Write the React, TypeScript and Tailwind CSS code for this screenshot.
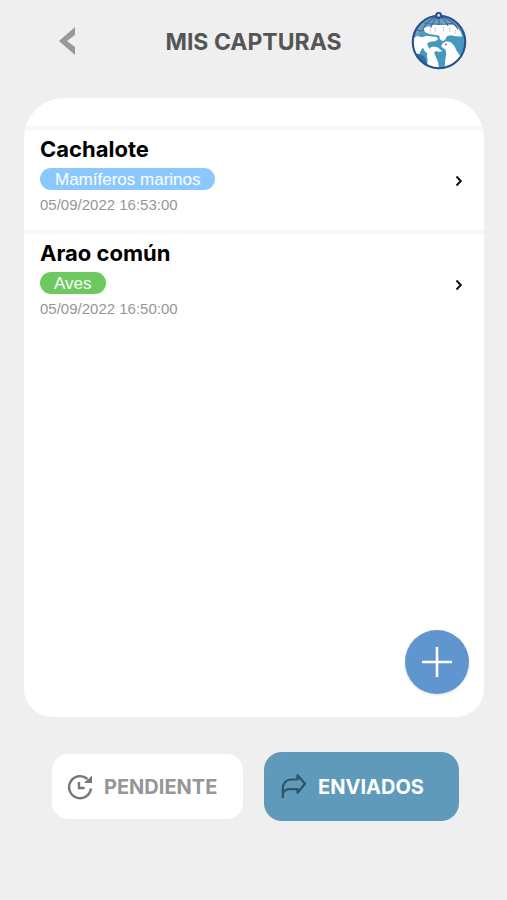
import { useState } from 'react';

interface Capture {
  id: number;
  name: string;
  group: string;
  tagClass: string;
  date: string;
}

const captures: Capture[] = [
  { id: 1, name: 'Cachalote', group: 'Mamíferos marinos', tagClass: 'bg-[#8bc8ff] px-[15px]', date: '05/09/2022 16:53:00' },
  { id: 2, name: 'Arao común', group: 'Aves', tagClass: 'bg-[#6dc95f] px-[14px]', date: '05/09/2022 16:50:00' },
];

function Logo() {
  return (
    <svg viewBox="36 24 162 168" className="w-[56px] h-[58px]" aria-hidden="true">
      <defs>
        <clipPath id="globe">
          <circle cx="117" cy="111" r="76" />
        </clipPath>
      </defs>
      <circle cx="117" cy="111" r="76" fill="#4599bd" />
      <g clipPath="url(#globe)">
        <path d="M38 30H198V88L166 68L120 58L78 74L38 104Z" fill="#6aa0c2" />
        <path d="M36 134L58 146L74 152L84 176L80 192H36Z" fill="#2f6fa3" />
        <path d="M72 72L84 66L94 66L104 59L116 62L130 58L144 61L158 62L170 68L180 82L184 95L166 94L150 91L140 94L135 104L127 109L119 102L118 93L104 90L88 88L76 82Z" fill="#fff" />
        <path d="M36 116L44 100L54 93L68 97L80 93L96 95L109 96L115 102L106 109L90 110L82 116L88 128L90 140L84 145L76 138L70 127L64 136L60 146L48 144L38 138Z" fill="#fff" />
        <path d="M82 192L84 164L82 150L85 137L92 127L102 124L114 127L126 137L118 140L108 137L103 142L108 154L115 170L117 192Z" fill="#fff" />
        <path d="M133 192L135 164L138 146L136 133L123 124L127 115L137 109L150 111L161 121L168 136L178 151L188 165L172 192Z" fill="#fff" />
        <path d="M117 36C92 43 76 58 68 78M117 36C104 45 96 56 93 70M117 36V62M117 36C132 45 140 54 143 64M117 36C146 43 164 58 172 74M74 56C98 61 136 61 160 56M52 74C58 80 66 80 74 78" fill="none" stroke="#3c659b" strokeWidth="3" />
        <path d="M56 80V96M70 80V90M92 74V84M106 70V84M130 68V82M148 70V84M164 76V86" stroke="#9eabc4" strokeWidth="2.5" strokeDasharray="4 3" />
        <circle cx="137" cy="118" r="2.5" fill="#315878" />
      </g>
      <circle cx="117" cy="111" r="76" fill="none" stroke="#28508a" strokeWidth="6" />
      <circle cx="116" cy="34" r="7" fill="#dfe7ef" stroke="#28508a" strokeWidth="6" />
    </svg>
  );
}

function PendingIcon() {
  return (
    <svg viewBox="0 0 26 26" className="w-[26px] h-[26px] shrink-0" fill="none" stroke="#777" strokeWidth="2.4" aria-hidden="true">
      <path d="M24 14.5A11 11 0 1 1 20.5 5" />
      <path d="M25 1.5V9H17L19.8 6.2L21.5 5Z" fill="#777" stroke="none" />
      <path d="M12 8V14H17.5" />
    </svg>
  );
}

function SentIcon() {
  return (
    <svg viewBox="0 0 26 26" className="w-[26px] h-[26px] shrink-0" fill="none" stroke="#2f5368" strokeWidth="2.2" strokeLinejoin="round" aria-hidden="true">
      <path d="M1.8 24V15.5C1.8 9 5 5.5 10.5 5.5H16.5V1.2L24 9.8L16.5 18.8V15.2H9C5 15.2 2.8 16.5 1.8 20" />
    </svg>
  );
}

function CaptureRow({ capture }: { capture: Capture }) {
  return (
    <li className="border-t-4 border-[#f8f8f8]">
      <button className="w-full h-[100px] pl-4 pr-[21px] flex items-start justify-between text-left">
        <span className="flex flex-col items-start pt-[7px]">
          <span className="font-['Inter'] font-bold text-[22px] leading-[24px] text-black">{capture.name}</span>
          <span className={`mt-[7px] h-[22px] rounded-full text-[17px] leading-[23px] text-white ${capture.tagClass}`}>
            {capture.group}
          </span>
          <span className="mt-[6px] text-[15px] leading-[18px] text-[#969696]">{capture.date}</span>
        </span>
        <svg viewBox="0 0 8 12" className="mt-[45px] w-2 h-3" fill="none" stroke="#111" strokeWidth="2" aria-hidden="true">
          <path d="M1.5 1.5L5.8 6L1.5 10.5" />
        </svg>
      </button>
    </li>
  );
}

export default function App() {
  const [tab, setTab] = useState('enviados');

  return (
    <div className="min-h-screen flex flex-col bg-[#efefef] font-['Liberation_Sans',sans-serif]">
      <header className="h-[98px] pt-3 px-10 flex items-start justify-between">
        <button aria-label="Volver" className="w-[56px] h-[58px] flex items-center justify-center">
          <svg viewBox="0 0 18 30" className="w-[18px] h-[30px]" aria-hidden="true">
            <path d="M16 1V9L8 15L16 21V29L0 15Z" fill="#999" />
          </svg>
        </button>
        <h1 className="font-['Inter'] font-bold text-[23px] leading-[60px] text-[#555]">MIS CAPTURAS</h1>
        <Logo />
      </header>

      <main className="relative flex-1 ml-6 mr-[23px] pt-7 bg-white rounded-t-[40px] rounded-b-[28px] overflow-hidden">
        <ul>
          {captures.map(c => (
            <CaptureRow key={c.id} capture={c} />
          ))}
        </ul>
        <button
          aria-label="Añadir captura"
          className="absolute right-[15px] bottom-[23px] w-16 h-16 rounded-full bg-[#6096d0] shadow-sm flex items-center justify-center"
        >
          <svg viewBox="0 0 30 30" className="w-[30px] h-[30px]" stroke="#fff" strokeWidth="2.6" aria-hidden="true">
            <path d="M15 0V30M0 15H30" />
          </svg>
        </button>
      </main>

      <footer className="h-[183px] pt-[35px] pl-[52px] pr-12 flex items-start gap-[21px] font-['Inter'] font-bold text-[20px]">
        <button
          onClick={() => setTab('pendiente')}
          aria-pressed={tab === 'pendiente'}
          className="mt-[2px] flex-[191] h-[65px] pl-[15px] pt-[1px] flex items-center gap-[11px] rounded-[16px] bg-white text-[#969696]"
        >
          <PendingIcon />
          PENDIENTE
        </button>
        <button
          onClick={() => setTab('enviados')}
          aria-pressed={tab === 'enviados'}
          className="flex-[193] h-[69px] pl-[17px] pt-[1px] flex items-center gap-[11px] rounded-[18px] bg-[#5f9aba] text-white"
        >
          <SentIcon />
          ENVIADOS
        </button>
      </footer>
    </div>
  );
}
